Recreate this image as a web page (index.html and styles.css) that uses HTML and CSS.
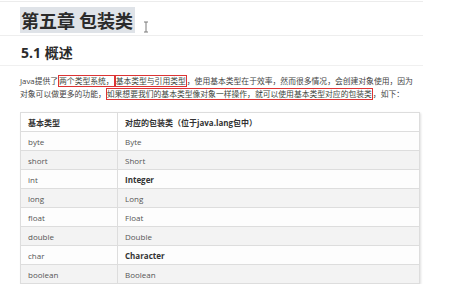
FILE: index.html
```html
<!DOCTYPE html>
<html lang="zh-CN">
<head>
    <meta charset="UTF-8">
    <meta name="viewport" content="width=device-width, initial-scale=1.0">
    <title>第五章 包装类</title>
    <link rel="stylesheet" href="styles.css">
</head>
<body>
    <div class="page">
        <h1><span class="selected">第五章 包装类</span></h1>
        <svg class="text-cursor" width="6" height="12" viewBox="0 0 6 12">
            <path d="M1 1h4M3 1v10M1 11h4" stroke="#7a7a7a" stroke-width="1" fill="none"/>
        </svg>

        <h2>5.1 概述</h2>

        <p class="intro">Java提供了<span class="mark">两个类型系统，</span><span class="mark">基本类型与引用类型</span>，使用基本类型在于效率，然而很多情况，会创建对象使用，因为对象可以做更多的功能，<span class="mark">如果想要我们的基本类型像对象一样操作，就可以使用基本类型对应的包装类</span>，如下：</p>

        <table class="types">
            <thead>
                <tr>
                    <th class="col-basic">基本类型</th>
                    <th>对应的包装类（位于java.lang包中）</th>
                </tr>
            </thead>
            <tbody>
                <tr><td>byte</td><td>Byte</td></tr>
                <tr><td>short</td><td>Short</td></tr>
                <tr><td>int</td><td><strong>Integer</strong></td></tr>
                <tr><td>long</td><td>Long</td></tr>
                <tr><td>float</td><td>Float</td></tr>
                <tr><td>double</td><td>Double</td></tr>
                <tr><td>char</td><td><strong>Character</strong></td></tr>
                <tr><td>boolean</td><td>Boolean</td></tr>
            </tbody>
        </table>
    </div>
</body>
</html>
```

FILE: styles.css
```css
* {
    margin: 0;
    padding: 0;
    box-sizing: border-box;
}

body {
    font-family: "Open Sans", "Noto Sans CJK SC", sans-serif;
    background: #fff;
    color: #333;
}

.page {
    position: relative;
    width: 423px;
    border-top: 1px solid #ececec;
    margin-top: 1px;
}

h1 {
    font-family: "Noto Sans CJK SC", sans-serif;
    font-size: 18px;
    line-height: 24px;
    font-weight: bold;
    color: #2b2b2b;
    padding: 6px 0 3px 20px;
    border-bottom: 1px solid #eeeeee;
}

.selected {
    background: #dfe3e8;
    padding: 0 2px 0 1px;
}

/* text cursor over the title */
.text-cursor {
    position: absolute;
    left: 143px;
    top: 19px;
}

h2 {
    font-size: 14px;
    line-height: 18px;
    font-weight: bold;
    color: #2b2b2b;
    padding: 8px 0 3px 21px;
    border-bottom: 1px solid #f0f0f0;
}

.intro {
    width: 400px;
    margin: 9px 0 0 20px;
    font-size: 7.8px;
    line-height: 12.5px;
    color: #444;
}

.mark {
    border: 1.5px solid #dc3434;
    color: #3c463c;
}

.types {
    margin: 12px 0 0 20px;
    width: 400px;
    border-collapse: collapse;
    font-size: 8px;
    color: #555;
    box-shadow: 1px 1px 2px rgba(0, 0, 0, 0.12);
}

.types th,
.types td {
    height: 19px;
    padding: 0 7px;
    text-align: left;
    border: 1px solid #dddddd;
    vertical-align: middle;
}

.types th {
    font-weight: bold;
    color: #333;
    background: #fff;
}

.types .col-basic {
    width: 97px;
}

.types tbody tr:nth-child(odd) {
    background: #fdfdfd;
}

.types tbody tr:nth-child(even) {
    background: #f3f3f3;
}

.types strong {
    color: #333;
}
```
